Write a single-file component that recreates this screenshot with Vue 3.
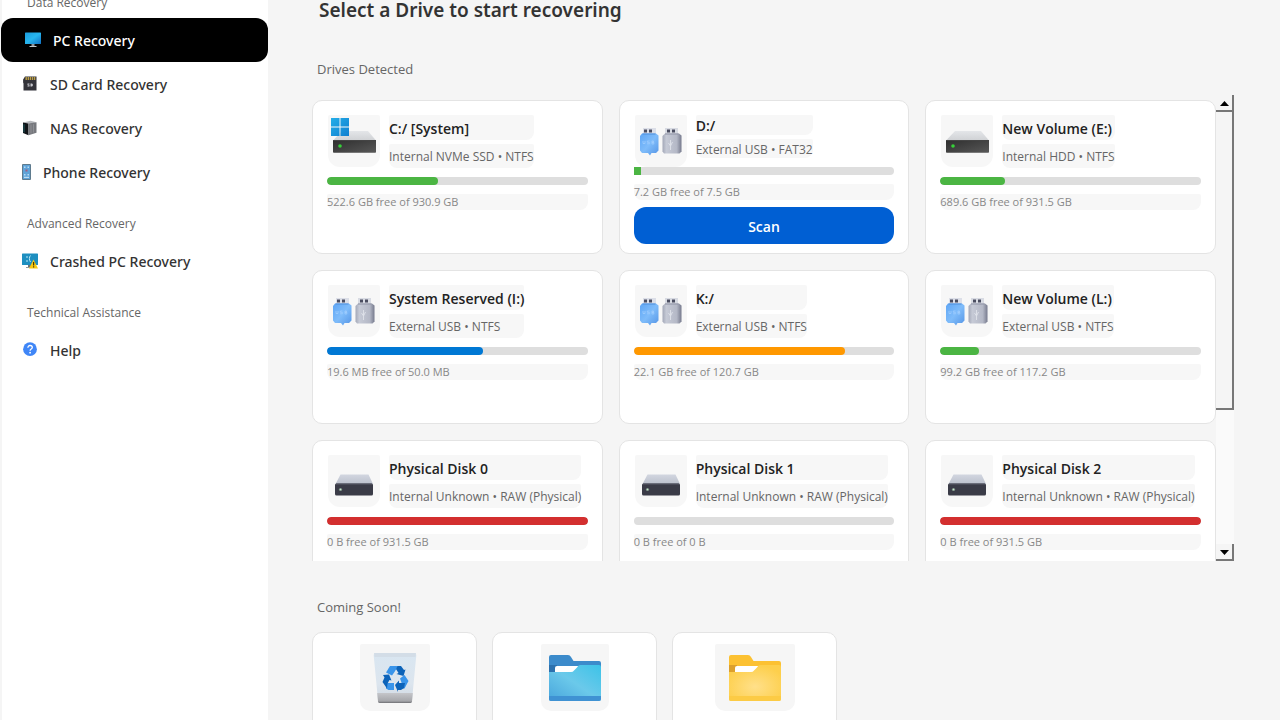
<script setup>
const groups = [
  {
    title: 'Data Recovery',
    items: [
      { label: 'PC Recovery', icon: 'pc', active: true },
      { label: 'SD Card Recovery', icon: 'sd' },
      { label: 'NAS Recovery', icon: 'nas' },
      { label: 'Phone Recovery', icon: 'phone' },
    ],
  },
  { title: 'Advanced Recovery', items: [{ label: 'Crashed PC Recovery', icon: 'crashed' }] },
  { title: 'Technical Assistance', items: [{ label: 'Help', icon: 'help' }] },
]

const drives = [
  { name: 'C:/ [System]', info: 'Internal NVMe SSD • NTFS', icon: 'system', used: 42.7, color: '#4bb543', size: '522.6 GB', total: '930.9 GB' },
  { name: 'D:/', info: 'External USB • FAT32', icon: 'usb', used: 3, color: '#4bb543', size: '7.2 GB', total: '7.5 GB', selected: true },
  { name: 'New Volume (E:)', info: 'Internal HDD • NTFS', icon: 'hdd', used: 25, color: '#4bb543', size: '689.6 GB', total: '931.5 GB' },
  { name: 'System Reserved (I:)', info: 'External USB • NTFS', icon: 'usb', used: 59.7, color: '#0078d4', size: '19.6 MB', total: '50.0 MB' },
  { name: 'K:/', info: 'External USB • NTFS', icon: 'usb', used: 81, color: '#ff9800', size: '22.1 GB', total: '120.7 GB' },
  { name: 'New Volume (L:)', info: 'External USB • NTFS', icon: 'usb', used: 14.8, color: '#4bb543', size: '99.2 GB', total: '117.2 GB' },
  { name: 'Physical Disk 0', info: 'Internal Unknown • RAW (Physical)', icon: 'disk', used: 100, color: '#d32f2f', size: '0 B', total: '931.5 GB' },
  { name: 'Physical Disk 1', info: 'Internal Unknown • RAW (Physical)', icon: 'disk', used: 0, color: '#d32f2f', size: '0 B', total: '0 B' },
  { name: 'Physical Disk 2', info: 'Internal Unknown • RAW (Physical)', icon: 'disk', used: 100, color: '#d32f2f', size: '0 B', total: '931.5 GB' },
]

const upcoming = ['bin', 'blue', 'yellow']
</script>

<template>
  <div class="app">
    <svg class="defs" aria-hidden="true">
      <defs>
        <linearGradient id="screen" x1="0" y1="0" x2="1" y2="1">
          <stop offset="0" stop-color="#1a9bdc" /><stop offset="0.5" stop-color="#27b5ee" /><stop offset="1" stop-color="#1170c4" />
        </linearGradient>
        <linearGradient id="win" x1="0" y1="0" x2="1" y2="1">
          <stop offset="0" stop-color="#25aee8" /><stop offset="1" stop-color="#0f7fd0" />
        </linearGradient>
        <linearGradient id="lid" x1="0" y1="0" x2="0" y2="1">
          <stop offset="0" stop-color="#e4e6e9" /><stop offset="1" stop-color="#cfd1d4" />
        </linearGradient>
        <linearGradient id="front" x1="0" y1="0" x2="1" y2="1">
          <stop offset="0" stop-color="#2e2e2e" /><stop offset="1" stop-color="#585858" />
        </linearGradient>
        <linearGradient id="lid2" x1="0" y1="0" x2="0" y2="1">
          <stop offset="0" stop-color="#d2d6e0" /><stop offset="1" stop-color="#bcc1cd" />
        </linearGradient>
        <linearGradient id="usbBlue" x1="0" y1="0" x2="1" y2="1">
          <stop offset="0" stop-color="#5fa6f5" /><stop offset="0.5" stop-color="#7fbcfa" /><stop offset="1" stop-color="#5595e6" />
        </linearGradient>
        <linearGradient id="usbGray" x1="0" y1="0" x2="1" y2="0">
          <stop offset="0" stop-color="#a3a8b8" /><stop offset="0.2" stop-color="#c6cad6" /><stop offset="0.75" stop-color="#b4b8c6" /><stop offset="1" stop-color="#767a8d" />
        </linearGradient>
        <linearGradient id="binBody" x1="0" y1="0" x2="0" y2="1">
          <stop offset="0" stop-color="#d9e6f1" /><stop offset="0.6" stop-color="#dce5ee" /><stop offset="1" stop-color="#cfd8e2" />
        </linearGradient>
        <linearGradient id="binBase" x1="0" y1="0" x2="0" y2="1">
          <stop offset="0" stop-color="#c5c6ca" /><stop offset="0.8" stop-color="#a6a7ab" /><stop offset="1" stop-color="#6d6e72" />
        </linearGradient>
        <linearGradient id="blueFront" x1="1" y1="0" x2="0" y2="1">
          <stop offset="0" stop-color="#3cc3e8" /><stop offset="0.5" stop-color="#6bc9ea" /><stop offset="1" stop-color="#48a5dc" />
        </linearGradient>
        <radialGradient id="yellowFront" cx="0.5" cy="0.6" r="0.6">
          <stop offset="0" stop-color="#ffe08a" /><stop offset="1" stop-color="#fdcf4c" />
        </radialGradient>
      </defs>
    </svg>

    <aside class="sidebar">
      <nav class="nav">
        <section v-for="g in groups" :key="g.title" class="group">
          <h2 class="group-title">{{ g.title }}</h2>
          <a v-for="i in g.items" :key="i.label" href="#" class="item" :class="{ active: i.active }">
            <svg v-if="i.icon === 'pc'" width="16" height="16" viewBox="0 0 16 16">
              <rect width="16" height="11.5" rx="0.6" y="0.5" fill="url(#screen)" />
              <path d="M6.5 12h3v2h-3z" fill="#8f959b" /><path d="M4.5 14h7v1h-7z" fill="#c2c6ca" />
            </svg>
            <svg v-else-if="i.icon === 'sd'" width="16" height="16" viewBox="0 0 16 16">
              <path d="M3 .5h11.500v14H1.500v-7l-.4-1v-3z" fill="#33333a" />
              <path d="M3.500 1h1.400v3H3.500zM5.600 1H7v3H5.600zM7.700 1h1.400v3H7.700zM9.800 1h1.400v3H9.800zM11.900 1h1.400v3h-1.400z" fill="#b99d45" />
              <path d="M5.500 7.500h2v1h-1V9h1v1.500h-2v-.8h1v-.5h-1zM8.500 7.500H10l.8.8v1.400l-.8.800H8.500z" fill="#c9c9cf" />
            </svg>
            <svg v-else-if="i.icon === 'nas'" width="16" height="16" viewBox="0 0 16 16">
              <path d="M1 2.500 8.500.8l6 1.500-5.700 1.500z" fill="#b7b9bd" />
              <path d="M1 2.500 6.500 3.500v11.700L1 13z" fill="#111418" />
              <path d="m6.500 3.500 8-1.200v10.500l-8 2.400z" fill="#77797e" />
              <path d="M2 4.300v8" stroke="#1e6c73" stroke-width="0.8" />
              <path d="M9 4.500v8.800M11.500 4.200v8.300" stroke="#94969b" stroke-width="0.8" />
            </svg>
            <svg v-else-if="i.icon === 'phone'" width="9" height="16" viewBox="0 0 9 16">
              <rect width="9" height="16" rx="1" fill="#5e7686" /><rect x="0.9" y="0.9" width="7.2" height="14.2" fill="#5fa3d8" />
              <path d="M2 2.500h1.500V4H2zM5.500 2.500H7V4H5.500zM2 10h1.500v1.500H2zM5.500 10H7v1.500H5.500z" fill="#b6dcf5" />
              <path d="M3.500 5.500h2v2h-2z" fill="#a15f83" /><path d="M2 12.800h5v1H2z" fill="#d6ecfa" />
            </svg>
            <svg v-else-if="i.icon === 'crashed'" width="16" height="16" viewBox="0 0 16 16">
              <rect y="0.5" width="16" height="11.5" rx="0.6" fill="#1e8fc0" />
              <path d="M5 3v2M5 7v2M8.500 2.500C7 4 7 7 8.500 9" stroke="#b9e7f7" stroke-width="1" fill="none" />
              <path d="M6 12h3v2H6z" fill="#6b7177" /><path d="M4 14h6v1H4z" fill="#92989d" />
              <path d="m11.500 6.500 4.500 9H7z" fill="#f7c911" /><path d="M11 9h1.200v3.500H11zM11 13.300h1.200v1.200H11z" fill="#463a07" />
            </svg>
            <svg v-else width="16" height="16" viewBox="0 0 16 16">
              <circle cx="8" cy="7.2" r="6.9" fill="#3f86f7" />
              <path d="M5.900 5.700c0-1.300.9-2.200 2.200-2.200s2.200.8 2.200 2c0 1.500-2.200 1.500-2.200 3.200" fill="none" stroke="#fff" stroke-width="1.3" />
              <circle cx="8.1" cy="10.7" r="0.9" fill="#fff" />
            </svg>
            <span>{{ i.label }}</span>
          </a>
        </section>
      </nav>
    </aside>

    <main class="main">
      <h1 class="title">Select a Drive to start recovering</h1>
      <h2 class="section-title">Drives Detected</h2>

      <div class="pane">
        <div class="grid">
          <article v-for="d in drives" :key="d.name" class="card" :class="{ selected: d.selected }">
            <div class="head">
              <div class="thumb">
                <svg v-if="d.icon === 'usb'" width="52" height="52" viewBox="0 0 52 52">
                  <g>
                    <path d="M8 13h13v6H8z" fill="#dcdfe8" />
                    <path d="M9 14.500h3v3H9zM14 14.500h3v3h-3z" fill="#4a4d60" />
                    <path d="M7 18.500h14l2.500 2V35.500L21 38h-4.500L15 40.500 13 38H7l-2-2.500V21z" fill="url(#usbBlue)" />
                    <path d="M7.500 19h13" stroke="#4f8fdc" />
                    <path d="M8 26v2.500h2V26M14.500 26h-2.200v1.300h2v1.500h-2.300M17 29v-3h1.500v1.300H17h1.800V29z" fill="none" stroke="#a3d0ff" stroke-width="0.7" />
                  </g>
                  <g>
                    <path d="M30 13h13v6H30z" fill="#d8dbe3" />
                    <path d="M32 14.500h3v3h-3zM37 14.500h3v3h-3z" fill="#4a4d60" />
                    <path d="M30 18.500h14l2.500 2V36.500l-2 2H29l-1.500-2V21z" fill="url(#usbGray)" />
                    <path d="M30 19h13.500" stroke="#8f93a5" />
                    <path d="M35.500 25v10M33.500 28l2 3 2-4" fill="none" stroke="#dfe2ea" stroke-width="0.9" />
                  </g>
                </svg>
                <svg v-else-if="d.icon === 'disk'" width="52" height="52" viewBox="0 0 52 52">
                  <path d="M12.500 19.500h28L45 29H7.500z" fill="url(#lid2)" />
                  <rect x="7" y="28.5" width="38" height="12" rx="1.5" fill="#3a3b47" />
                  <path d="M8 29h36" stroke="#5b5d6b" /><circle cx="12.5" cy="34.5" r="1.6" fill="#83998d" /><circle cx="12.5" cy="34.5" r="0.7" fill="#c6e5c9" />
                </svg>
                <svg v-else width="52" height="52" viewBox="0 0 52 52">
                  <path d="M14 16h26l8 9.500H5z" fill="url(#lid)" />
                  <rect x="5" y="25" width="43" height="12.8" rx="0.8" fill="url(#front)" />
                  <path d="M5 25.500h43" stroke="#444" /><circle cx="12" cy="31" r="1.8" fill="#36d038" />
                  <path v-if="d.icon === 'system'" d="M3 3h8.500v8.500H3zM12.500 3H21v8.500h-8.500zM3 12.500h8.500V21H3zM12.500 12.500H21V21h-8.500z" fill="url(#win)" />
                </svg>
              </div>
              <div class="meta">
                <h3 class="name">{{ d.name }}</h3>
                <p class="info">{{ d.info }}</p>
              </div>
            </div>
            <div class="bar"><div class="fill" :style="{ width: d.used + '%', background: d.color }"></div></div>
            <p class="free">{{ d.size }} free of {{ d.total }}</p>
            <button v-if="d.selected" type="button" class="scan">Scan</button>
          </article>
        </div>
        <div class="scrollbar">
          <button type="button" class="arrow" aria-label="Scroll up">
            <svg width="9" height="5" viewBox="0 0 9 5"><path d="M4.500 0 9 5H0z" fill="#000" /></svg>
          </button>
          <div class="track"><div class="handle"></div></div>
          <button type="button" class="arrow" aria-label="Scroll down">
            <svg width="9" height="5" viewBox="0 0 9 5"><path d="M0 0h9L4.500 5z" fill="#000" /></svg>
          </button>
        </div>
      </div>

      <h2 class="section-title soon">Coming Soon!</h2>
      <div class="tiles">
        <article v-for="u in upcoming" :key="u" class="tile">
          <div class="picture" :class="u">
            <svg v-if="u === 'bin'" width="44" height="52" viewBox="0 0 44 52">
              <path d="M1.500 2q-1 0-.8 1.500L5 48q.3 3 2 3h30q1.700 0 2-3l4.300-44.500Q43.500 2 42.500 2z" fill="url(#binBody)" />
              <path d="M1 1h42l-.5 4h-41z" fill="#d3dde7" />
              <path d="M4.200 41h35.600l-.8 8.500q-.2 1.500-1.800 1.500H6.800Q5.200 51 5 49.500z" fill="url(#binBase)" />
              <path d="M17 14h8l-3.500 6-2.500 3.500-6-3z" fill="#3994ea" />
              <path d="M24.500 14h3.500l3 4 1.500-.5-2 6.500-7-2 2-1-2.500-4z" fill="#0c63b9" />
              <path d="m31.500 23 4 6-4 7.500h-4l1-6-1.500-4z" fill="#3994ea" />
              <path d="m22 33 4-4.500v2.500h6l-1 5-3 2h-3v2z" fill="#0c63b9" />
              <path d="M13.500 31h7.500v7h-5.500l-2.500-1.500z" fill="#3994ea" />
              <path d="m10 23 6-.5 2.500 6-2-.5-2 3.500-.5 5-4.500-6.500 2-4.500z" fill="#0c63b9" />
            </svg>
            <svg v-else width="52" height="46" viewBox="0 0 52 46">
              <path d="M2 0h17q2 0 3 2l2.500 4H50q2 0 2 2v14H0V2q0-2 2-2z" :fill="u === 'blue' ? '#3c8bcb' : '#fcc132'" />
              <path d="M0 10h8v7H0z" :fill="u === 'blue' ? '#2c71ae' : '#dca02c'" />
              <path d="M8 11h22v6H6v-4q0-2 2-2z" fill="#fff" />
              <path d="M0 17h22q2 0 3-1.500l3-3Q29 10 31 10h19q2 0 2 2v32q0 2-2 2H2q-2 0-2-2z" :fill="u === 'blue' ? 'url(#blueFront)' : 'url(#yellowFront)'" />
              <path d="M0 41h52v3q0 2-2 2H2q-2 0-2-2z" :fill="u === 'blue' ? '#3f92d3' : '#fccb45'" />
            </svg>
          </div>
        </article>
      </div>
    </main>
  </div>
</template>

<style>
body {
  margin: 0;
  background: #f5f5f5;
}
</style>

<style scoped>
.app {
  display: flex;
  height: 100vh;
  overflow: hidden;
  background: #f5f5f5;
  color: #1f1f1f;
  font-family: "Open Sans", "Noto Sans", sans-serif;
}
.app * {
  box-sizing: border-box;
}
h1, h2, h3, p {
  margin: 0;
  font-weight: 400;
}
svg {
  display: block;
  flex: none;
}
.defs {
  position: absolute;
  width: 0;
  height: 0;
}
.sidebar {
  flex: 0 0 268px;
  background: #fff;
  border-left: 2px solid #f5f5f5;
}
.nav {
  margin: -27px 0 0 -1px;
}
.group-title {
  padding: 22px 0 7px 26px;
  font-size: 12px;
  line-height: 16px;
  color: #666;
}
.item {
  display: flex;
  align-items: center;
  gap: 12px;
  height: 44px;
  padding-left: 21px;
  border-radius: 12px;
  color: #333;
  font-family: "Noto Sans", "Open Sans", sans-serif;
  font-size: 14px;
  font-weight: 500;
  text-decoration: none;
}
.item.active {
  padding-left: 24px;
  background: #000;
  color: #fff;
}
.main {
  flex: 1;
  min-width: 0;
  display: flex;
  flex-direction: column;
  padding: 0 46px 0 44px;
}
.title {
  padding-left: 7px;
  font-family: "Noto Sans", "Open Sans", sans-serif;
  font-size: 19px;
  line-height: 20px;
  font-weight: 600;
  color: #333;
}
.section-title {
  margin-top: 41px;
  padding-left: 5px;
  font-size: 13px;
  line-height: 16px;
  color: #666;
}
.pane {
  flex: 1;
  min-height: 0;
  display: flex;
  margin-top: 18px;
  overflow: hidden;
}
.grid {
  flex: 1;
  min-width: 0;
  display: grid;
  grid-template-columns: repeat(3, 1fr);
  grid-auto-rows: 154px;
  gap: 16px;
  padding-top: 5px;
}
.card, .tile {
  background: #fff;
  border: 1px solid #e4e4e4;
  border-radius: 10px;
}
.card {
  padding: 14px;
}
.head {
  display: flex;
  gap: 9px;
  height: 53px;
  padding-left: 1px;
}
.thumb {
  flex: none;
  width: 52px;
  height: 52px;
  border-radius: 2px 2px 12px 12px;
  background: #f7f7f7;
}
.meta {
  display: flex;
  flex-direction: column;
  gap: 4px;
}
.name, .info {
  flex: 1;
  display: flex;
  align-items: center;
  background: #f7f7f7;
  border-radius: 2px 2px 8px 8px;
  line-height: 16px;
  white-space: nowrap;
}
.name {
  padding-top: 3px;
  font-size: 14px;
  font-weight: 600;
  color: #222;
}
.info {
  padding-top: 3px;
  font-size: 12px;
  color: #666;
}
.bar {
  height: 8px;
  margin-top: 9px;
  border-radius: 4px;
  overflow: hidden;
  background: #dedede;
}
.fill {
  height: 100%;
  border-radius: 4px;
}
.free {
  margin-top: 9px;
  border-radius: 2px 2px 8px 8px;
  background: #f7f7f7;
  font-size: 11px;
  line-height: 16px;
  color: #888;
}
.selected .head {
  height: 43px;
}
.selected .bar {
  border-radius: 0 4px 4px 0;
}
.selected .fill {
  border-radius: 0;
}
.scan {
  display: block;
  width: 100%;
  height: 37px;
  margin-top: 7px;
  padding: 2px 0 0;
  border: 0;
  border-radius: 12px;
  background: #005fd3;
  color: #fff;
  font-family: inherit;
  font-size: 14px;
  font-weight: 600;
}
.scrollbar {
  flex: 0 0 18px;
  display: flex;
  flex-direction: column;
  background: #fafafa;
}
.arrow {
  flex: none;
  display: grid;
  place-items: center;
  height: 17px;
  padding: 2px 0 0;
  border: 0 solid #777;
  border-width: 0 2px 2px 0;
  background: #f5f5f5;
}
.track {
  flex: 1;
}
.handle {
  height: 69%;
  border: 0 solid #777;
  border-width: 0 2px 2px 0;
  background: #f5f5f5;
}
.section-title.soon {
  margin-top: 38px;
}
.tiles {
  display: flex;
  gap: 15px;
  margin: 17px 0 -72px;
}
.tile {
  width: 165px;
  height: 160px;
  padding-top: 11px;
}
.picture {
  display: grid;
  place-items: center;
  width: 68px;
  height: 67px;
  margin: 0 auto;
  border-radius: 2px 2px 10px 10px;
  background: #f6f6f6;
}
.picture.bin {
  width: 70px;
}
.picture.yellow {
  width: 80px;
}
</style>
